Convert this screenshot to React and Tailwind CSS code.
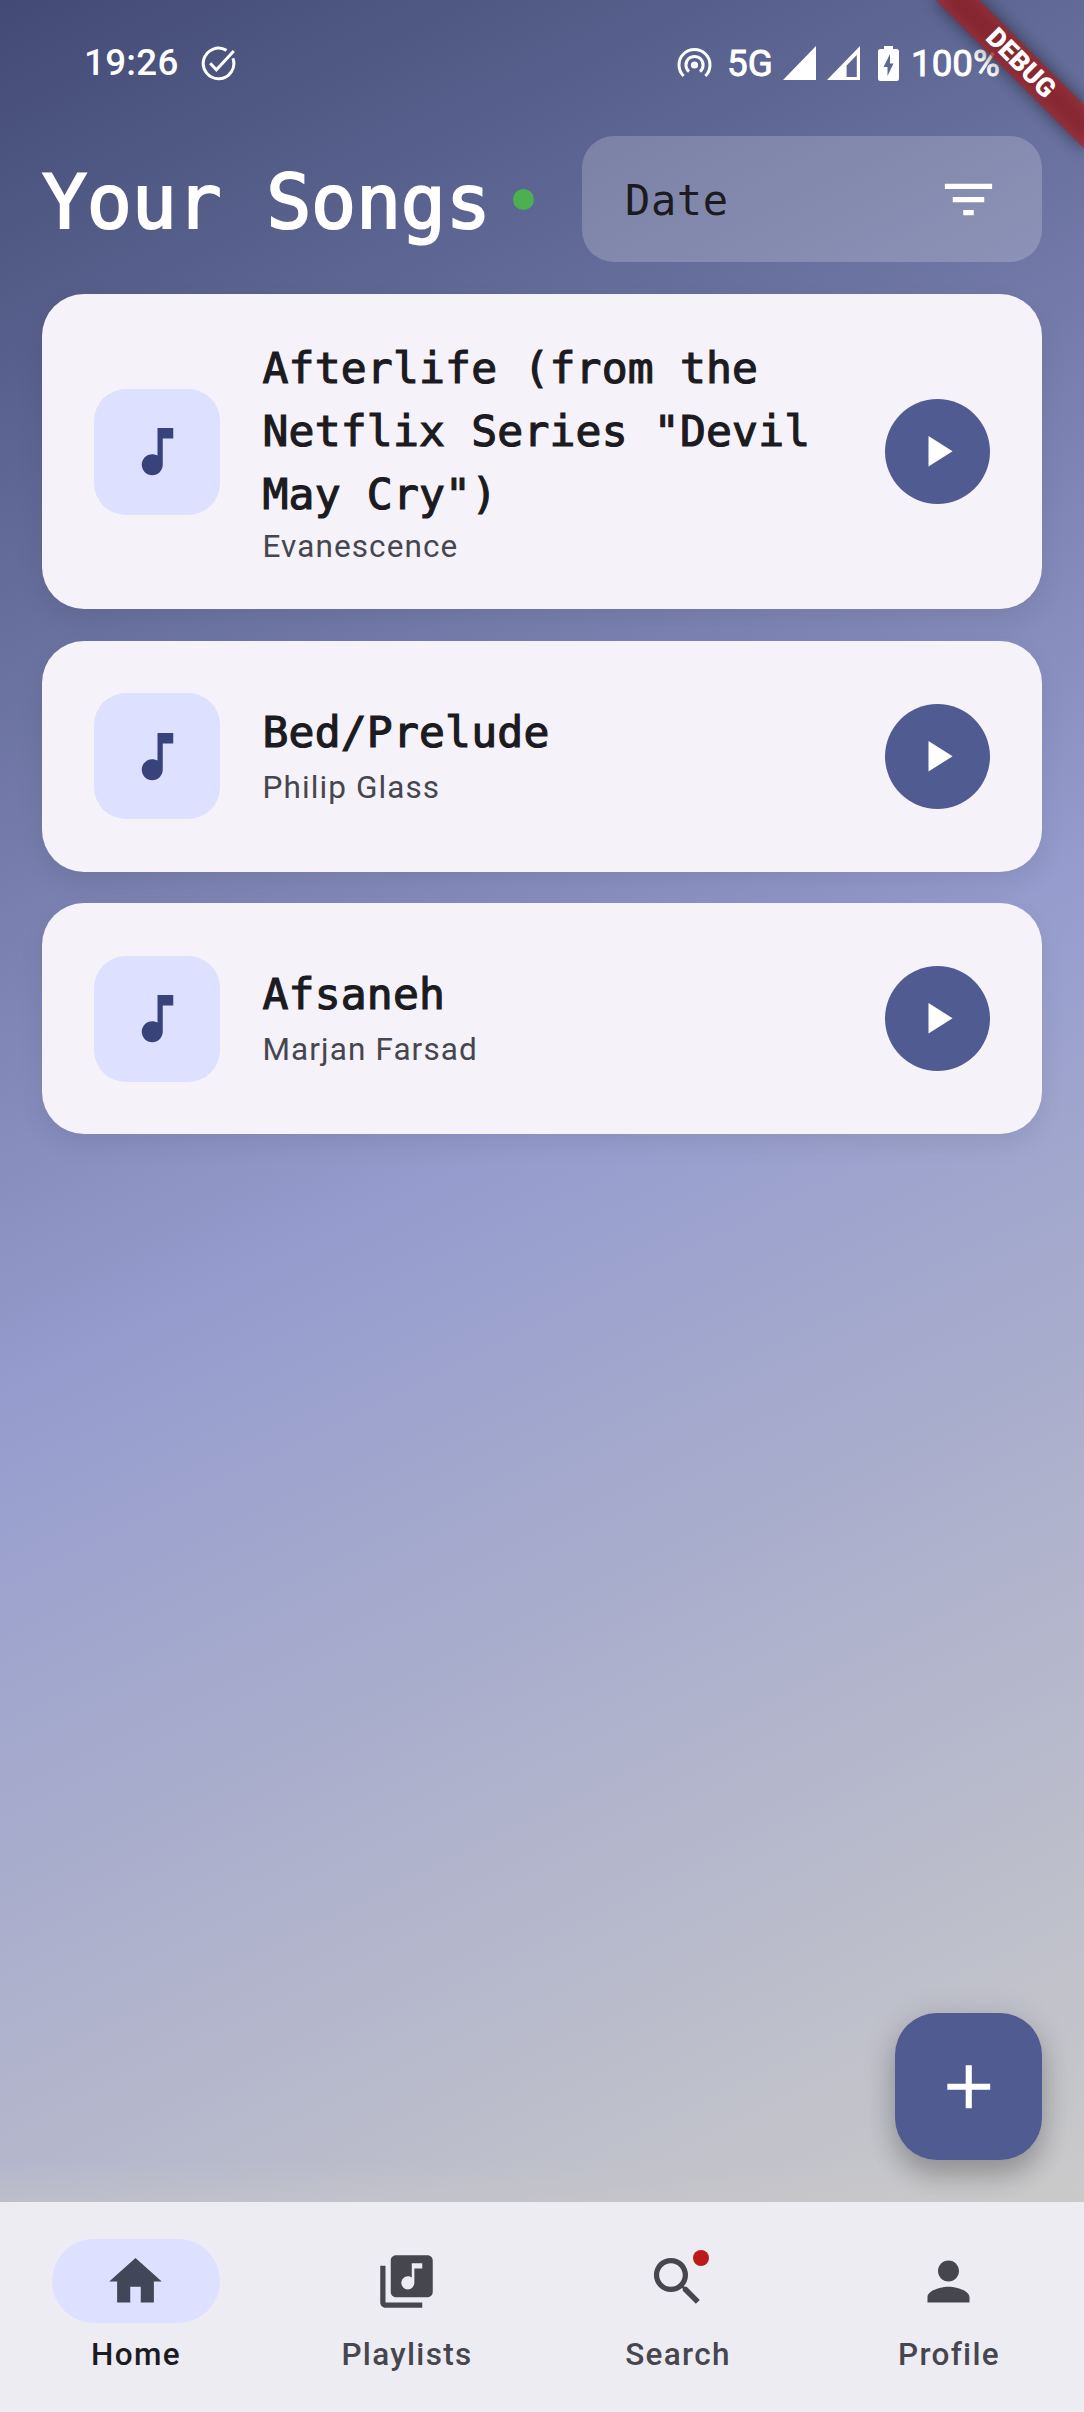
import {
  MdAdd,
  MdFilterList,
  MdHome,
  MdLibraryMusic,
  MdMusicNote,
  MdPerson,
  MdPlayArrow,
  MdSearch,
} from "react-icons/md";

const songs = [
  { title: 'Afterlife (from the Netflix Series "Devil May Cry")', artist: "Evanescence", tall: true },
  { title: "Bed/Prelude", artist: "Philip Glass" },
  { title: "Afsaneh", artist: "Marjan Farsad" },
];

const tabs = [
  { label: "Home", Icon: MdHome, active: true },
  { label: "Playlists", Icon: MdLibraryMusic },
  { label: "Search", Icon: MdSearch, badge: true },
  { label: "Profile", Icon: MdPerson },
];

function StatusBar() {
  return (
    <div className="flex h-[126px] items-center pl-[84px] pr-[85px] text-[36.75px] font-medium text-white">
      <span className="w-[117px] leading-none tracking-[0.3px]">19:26</span>
      <svg className="size-[35px]" viewBox="0 0 35 35" fill="none" stroke="currentColor" strokeWidth="3">
        <path d="M31.9 12.2A15.3 15.3 0 1 1 25.5 4.4" />
        <path d="M9.2 17.2l6.2 6.6L32.8 5" />
      </svg>
      <div className="ml-auto flex items-center">
        <svg className="mr-[15px] h-[32px] w-[35px]" viewBox="0 0 35 32" fill="none" stroke="currentColor" strokeWidth="3">
          <circle cx="17.5" cy="18" r="3.6" fill="currentColor" stroke="none" />
          <path d="M12 24.6a8.6 8.6 0 1 1 11 0" />
          <path d="M6.600 29a15.500 15.500 0 1 1 21.800 0" />
        </svg>
        <span className="w-[56px] pt-[2px] font-normal leading-none [-webkit-text-stroke:0.9px_white]">5G</span>
        <svg className="h-[34px] w-[33px]" viewBox="0 0 33 34" fill="currentColor">
          <path d="M33 0v34H0z" />
        </svg>
        <svg className="ml-[11px] h-[34px] w-[33px]" viewBox="0 0 33 34" fill="currentColor" fillRule="evenodd">
          <path d="M33 0v34H0zM29.800 9L19.600 19.600V31h10.200z" />
        </svg>
        <svg className="ml-[18px] mr-[12px] h-[35px] w-[21px]" viewBox="0 0 21 35" fill="currentColor" fillRule="evenodd">
          <path d="M6 0h9v3h3.500a2.500 2.500 0 0 1 2.500 2.500v27a2.500 2.500 0 0 1-2.500 2.500h-16a2.500 2.500 0 0 1-2.500-2.500v-27A2.500 2.500 0 0 1 2.500 3H6zM12 8L5.500 21H9.500V30L15.500 17.500H12z" />
        </svg>
        <span className="w-[88px] whitespace-nowrap pt-[2px] font-normal leading-none [-webkit-text-stroke:0.9px_white]">
          100%
        </span>
      </div>
    </div>
  );
}

function Header() {
  return (
    <div className="mt-[10px] flex h-[126px] items-center px-[42px]">
      <h1 className="w-[451px] whitespace-pre pt-[5px] font-['DejaVu_Sans_Mono',monospace] text-[75px] leading-[90px] tracking-[-0.3px] text-white [-webkit-text-stroke:2px_white]">
        Your Songs
      </h1>
      <span className="ml-[20px] size-[21px] rounded-full bg-[#4caf50]" />
      <div className="ml-auto flex h-[126px] w-[460px] items-center justify-between rounded-[32px] bg-white/20 pl-[43px] pr-[42px]">
        <span className="pt-[4px] font-['DejaVu_Sans_Mono',monospace] text-[42px] font-extralight leading-none tracking-[0.6px] text-[#1b1b21]">
          Date
        </span>
        <MdFilterList className="size-[63px] text-white" />
      </div>
    </div>
  );
}

function SongCard({ title, artist, tall }) {
  return (
    <div
      className={`flex items-center rounded-[42px] bg-[#f5f2fa] px-[52px] shadow-[0_10px_26px_rgba(0,0,0,0.08)] ${
        tall ? "h-[315px]" : "h-[231px]"
      }`}
    >
      <div className="flex size-[126px] shrink-0 items-center justify-center rounded-[32px] bg-[#dde0ff]">
        <MdMusicNote className="size-[63px] text-[#384379]" />
      </div>
      <div className={`ml-[42.5px] w-[580px] shrink-0 ${tall ? "pt-[2px]" : "pb-[3px]"}`}>
        <div className="font-['DejaVu_Sans_Mono',monospace] text-[43px] leading-[63px] tracking-[0.2px] text-[#1b1b21] [-webkit-text-stroke:1.2px_#1b1b21]">
          {title}
        </div>
        <div
          className={`text-[31.5px] leading-[42px] tracking-[1.1px] text-[#46464f] ${tall ? "" : "mt-[3px]"}`}
        >
          {artist}
        </div>
      </div>
      <button className="ml-auto flex size-[105px] shrink-0 items-center justify-center rounded-full bg-[#505b92]">
        <MdPlayArrow className="size-[52.5px] text-white" />
      </button>
    </div>
  );
}

function NavItem({ label, Icon, active, badge }) {
  return (
    <div className="flex flex-1 flex-col items-center pt-[37px]">
      <div className={`flex h-[84px] w-[168px] items-center justify-center rounded-full ${active ? "bg-[#dde0ff]" : ""}`}>
        <div className="relative">
          <Icon className={`size-[63px] ${active ? "text-[#424659]" : "text-[#46464f]"}`} />
          {badge && <span className="absolute right-0 top-0 size-[16px] rounded-full bg-[#ba1a1a]" />}
        </div>
      </div>
      <span
        className={`mt-[11px] pl-px text-[31.5px] font-medium leading-[42px] tracking-[1.31px] ${
          active ? "text-[#1b1b21]" : "text-[#46464f]"
        }`}
      >
        {label}
      </span>
    </div>
  );
}

function DebugBanner() {
  return (
    <div className="pointer-events-none absolute right-0 top-0 size-[200px] overflow-hidden">
      <div className="absolute left-full top-0 h-0 w-0 rotate-45">
        <div className="absolute -left-[105px] top-[73.5px] h-[31.5px] w-[210px] bg-black/50 blur-[9px]" />
        <div className="absolute -left-[105px] top-[73.5px] flex h-[31.5px] w-[210px] items-center justify-center bg-[#b71c1c]/63 text-[26.8px] font-black leading-none text-white">
          DEBUG
        </div>
      </div>
    </div>
  );
}

export default function App() {
  return (
    <div className="relative flex h-[2412px] w-[1084px] flex-col overflow-hidden font-[Roboto,sans-serif]">
      <div className="flex h-[2202px] flex-col bg-[linear-gradient(to_top,rgba(202,200,200,0.4),rgba(202,200,200,0)_40px),linear-gradient(153.8deg,#424a75_0%,#969dce_51.5%,#cacaca_100%)]">
        <StatusBar />
        <Header />
        <main className="mt-[32px] flex flex-1 flex-col gap-[31.5px] px-[42px]">
          {songs.map((song) => (
            <SongCard key={song.title} {...song} />
          ))}
          <button className="mb-[42px] mt-auto flex size-[147px] items-center justify-center self-end rounded-[42px] bg-[#505b92] shadow-[0_16px_26px_rgba(0,0,0,0.2),0_4px_36px_rgba(0,0,0,0.12)]">
            <MdAdd className="size-[73.5px] text-white" />
          </button>
        </main>
      </div>
      <nav className="relative flex h-[210px] bg-[#eeecf3]">
        {tabs.map((tab) => (
          <NavItem key={tab.label} {...tab} />
        ))}
      </nav>
      <DebugBanner />
    </div>
  );
}
